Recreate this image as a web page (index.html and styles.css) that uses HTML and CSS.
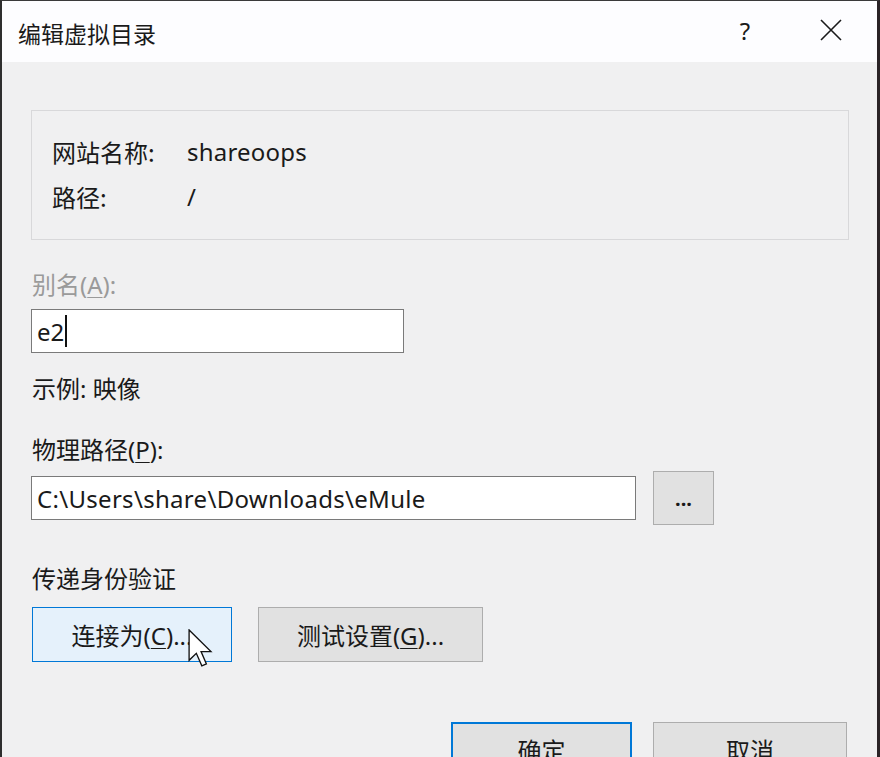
FILE: index.html
```html
<!DOCTYPE html>
<html>
<head>
    <meta charset="utf-8">
    <title>编辑虚拟目录</title>
    <link rel="stylesheet" href="styles.css">
</head>
<body>
    <div class="dialog">
        <div class="titlebar">
            <span class="title">编辑虚拟目录</span>
            <span class="help">?</span>
            <svg class="close" width="22" height="22" viewBox="0 0 22 22">
                <path d="M1 1 L21 21 M21 1 L1 21" stroke="#1a1a1a" stroke-width="1.6" fill="none"/>
            </svg>
        </div>

        <div class="content">
            <div class="info">
                <div class="info-row">
                    <span class="info-label">网站名称:</span>
                    <span class="info-value">shareoops</span>
                </div>
                <div class="info-row">
                    <span class="info-label">路径:</span>
                    <span class="info-value">/</span>
                </div>
            </div>

            <div class="label disabled alias-label">别名(<u>A</u>):</div>
            <div class="textbox alias">e2<span class="caret"></span></div>

            <div class="label example">示例: 映像</div>

            <div class="label path-label">物理路径(<u>P</u>):</div>
            <div class="path-row">
                <div class="textbox path">C:\Users\share\Downloads\eMule</div>
                <button class="btn browse">...</button>
            </div>

            <div class="label auth-label">传递身份验证</div>
            <div class="btn-row">
                <button class="btn focused connect">连接为(<u>C</u>)...</button>
                <button class="btn test">测试设置(<u>G</u>)...</button>
                <!-- mouse pointer over the first button -->
                <svg class="pointer" width="25" height="38" viewBox="0 0 13 20">
                    <path d="M0.5 0.5 V16.5 L4.3 12.8 L7.2 19.4 L9.6 18.4 L6.8 11.9 H12 Z" fill="#fff" stroke="#111" stroke-width="0.7" stroke-linejoin="miter"/>
                </svg>
            </div>

            <div class="footer">
                <button class="btn primary ok">确定</button>
                <button class="btn cancel">取消</button>
            </div>
        </div>
    </div>
</body>
</html>
```

FILE: styles.css
```css
body {
    margin: 0;
    padding: 0;
    font-family: "Noto Sans", "Noto Sans CJK SC", sans-serif;
    font-size: 24px;
    color: #1a1a1a;
    overflow: hidden;
}

.dialog {
    width: 880px;
    height: 757px;
    box-sizing: border-box;
    border-top: 1px solid #3a3a3a;
    border-left: 2px solid #2e2e2e;
    border-right: 3px solid #2a2326;
    background-color: #f0f0f1;
    overflow: hidden;
}

.titlebar {
    height: 61px;
    background-color: #fdfdff;
    display: flex;
    align-items: center;
    padding: 0 35px 0 16px;
}

.title {
    font-family: "Noto Sans CJK SC", sans-serif;
    font-size: 23px;
    color: #1a1a1a;
    margin-top: 2px;
}

.help {
    margin-left: auto;
    width: 26px;
    text-align: center;
    font-size: 24px;
    margin-right: 62px;
    margin-top: -2px;
}

.close {
    margin-top: -3px;
}

.content {
    padding: 48px 28px 0 29px;
}

.info {
    border: 1px solid #d8d8da;
    padding: 26px 20px 0 20px;
    height: 102px;
}

.info-row {
    display: flex;
    line-height: 30px;
    height: 30px;
}

.info-row + .info-row {
    margin-top: 15px;
}

.info-label {
    width: 135px;
    font-family: "Noto Sans CJK SC", sans-serif;
}

.info-value {
    letter-spacing: 0.2px;
}

.label {
    line-height: 30px;
    height: 30px;
    padding-left: 1px;
}

.label u {
    text-underline-offset: 3px;
    text-decoration-thickness: 1px;
}

.disabled {
    color: #9a9a9a;
}

.alias-label {
    margin-top: 30px;
}

.textbox {
    box-sizing: border-box;
    height: 44px;
    border: 1px solid #7a7a7a;
    background-color: #fff;
    display: flex;
    align-items: center;
    padding-left: 5px;
    font-size: 24px;
}

.alias {
    width: 373px;
    margin-top: 9px;
}

.caret {
    display: inline-block;
    width: 2px;
    height: 32px;
    background-color: #111;
    margin-left: 1px;
}

.example {
    margin-top: 21px;
}

.path-label {
    margin-top: 31px;
}

.path-row {
    display: flex;
    align-items: center;
    margin-top: 6px;
}

.path {
    width: 605px;
    letter-spacing: 0.3px;
}

.btn {
    font-family: "Noto Sans", "Noto Sans CJK SC", sans-serif;
    font-size: 24px;
    color: #1a1a1a;
    background-color: #e1e1e1;
    border: 1px solid #adadad;
    padding: 0;
    box-sizing: border-box;
    cursor: pointer;
}

.btn u {
    text-underline-offset: 3px;
    text-decoration-thickness: 1px;
}

.browse {
    width: 61px;
    height: 54px;
    margin-left: 17px;
    font-size: 20px;
    font-weight: bold;
}

.auth-label {
    margin-top: 39px;
}

.btn-row {
    display: flex;
    gap: 26px;
    margin-top: 13px;
    padding-left: 1px;
    position: relative;
}

.btn-row .btn {
    height: 55px;
}

.connect {
    width: 200px;
}

.test {
    width: 225px;
}

.focused {
    background-color: #e5f1fb;
    border: 1px solid #0078d7;
}

.pointer {
    position: absolute;
    left: 157px;
    top: 22px;
}

.footer {
    display: flex;
    justify-content: flex-end;
    gap: 21px;
    margin-top: 60px;
    padding-right: 2px;
}

.footer .btn {
    height: 55px;
}

.ok {
    width: 181px;
}

.cancel {
    width: 194px;
}

.primary {
    border: 2px solid #0078d7;
}
```
